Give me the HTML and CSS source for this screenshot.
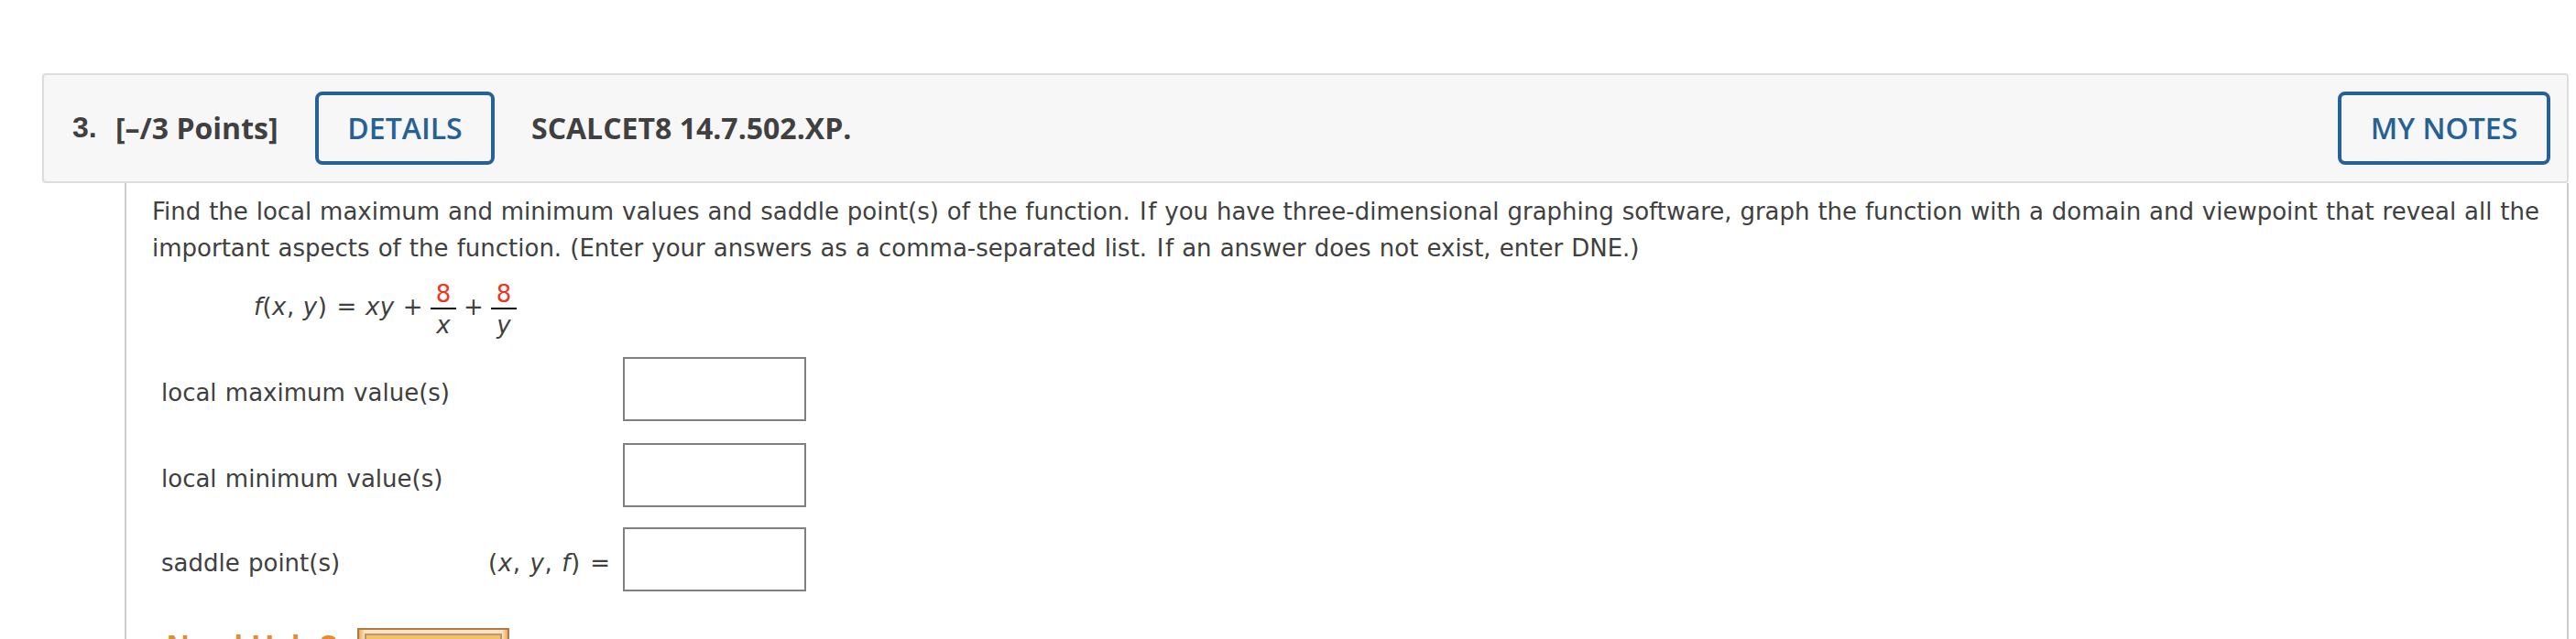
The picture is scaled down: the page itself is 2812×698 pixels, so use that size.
FILE: index.html
```html
<!DOCTYPE html>
<html lang="en">
<head>
<meta charset="utf-8">
<title>Question 3</title>
<link rel="stylesheet" href="styles.css">
</head>
<body>
<article class="question">
  <header class="question-header">
    <span class="number">3.</span>
    <span class="points">[–/3 Points]</span>
    <button class="btn details">DETAILS</button>
    <span class="source">SCALCET8 14.7.502.XP.</span>
    <button class="btn notes">MY NOTES</button>
  </header>
  <section class="question-body">
    <p class="prompt"><span class="line line-one">Find the local maximum and minimum values and saddle point(s) of the function. <span class="wide">I</span>f you have three-dimensional graphing software, graph the function with a domain and viewpoint that reveal all the</span>
    <span class="line line-two">important aspects of the function. (Enter your answers as a comma-separated list. <span class="wide">I</span>f an answer does not exist, enter DNE.)</span></p>
    <div class="formula">
      <span class="lhs"><i>f</i>(<i>x</i>, <i>y</i>) <span class="equals">=</span> <i>xy</i> +</span>
      <span class="fraction"><span class="num">8</span><i class="den">x</i></span>
      <span class="plus">+</span>
      <span class="fraction"><span class="num">8</span><i class="den">y</i></span>
    </div>
    <div class="answers">
      <div class="row"><label class="label" for="max">local maximum value(s)</label><input class="answer" id="max"></div>
      <div class="row"><label class="label" for="min">local minimum value(s)</label><input class="answer" id="min"></div>
      <div class="row row-saddle"><label class="label" for="saddle">saddle point(s)</label><span class="tuple"><span class="vars">(<i>x</i>, <i>y</i>, <i>f</i>)</span><span>=</span></span><input class="answer" id="saddle"></div>
    </div>
    <div class="help">
      <span class="help-title">Need Help?</span>
      <span class="help-button"><span class="help-face"></span></span>
    </div>
  </section>
</article>
</body>
</html>
```
FILE: styles.css
```css
* { box-sizing: border-box; }
body {
  margin: 0;
  height: 698px;
  overflow: hidden;
  background: #fff;
  color: #404040;
  font: 26px/40px Verdana, "DejaVu Sans", sans-serif;
}
.question { padding: 80px 8px 0 46px; }
.question-header {
  display: flex;
  align-items: center;
  height: 120px;
  padding: 0 18px 0 31px;
  border: 2px solid #ddd;
  border-radius: 4px;
  background: #f7f7f7;
  font: bold 32px/44px "Open Sans", sans-serif;
  white-space: nowrap;
}
.number { width: 47px; padding-bottom: 2px; font-family: "Liberation Sans", Arial, sans-serif; }
.points { width: 218px; }
.btn {
  height: 80px;
  padding: 0;
  border: 4px solid #266196;
  border-radius: 8px;
  background: transparent;
  color: #266196;
  font: 600 32px/44px "Open Sans", sans-serif;
}
.details { width: 196px; margin-right: 40px; }
.notes { width: 232px; margin-left: auto; }
.question-body {
  height: 498px;
  margin-left: 90px;
  padding: 11px 0 0 28px;
  border: solid #ccc;
  border-width: 0 2px;
}
.prompt { margin: 0; white-space: nowrap; }
.line { display: block; }
.line-one { word-spacing: 0.6px; }
.line-two { word-spacing: 0.85px; }
.wide { padding: 0 1.5px; }
.formula {
  display: flex;
  height: 78px;
  margin-top: 10px;
  padding-left: 111px;
  line-height: 34px;
}
.lhs, .plus { padding-top: 17px; white-space: pre; }
.lhs { width: 193px; letter-spacing: 0.4px; word-spacing: 0.6px; }
.equals { padding-left: 1px; }
.plus { width: 38px; text-align: center; }
.fraction { display: flex; flex-direction: column; width: 28px; text-align: center; }
.num { height: 37px; border-bottom: 2px solid #000; color: #ee3524; line-height: 40px; }
.den { line-height: 34px; }
.answers { padding: 11px 0 0 10px; }
.row { display: flex; width: 704px; height: 94px; }
.row-saddle { height: 110px; margin-top: -2px; }
.label { width: 357px; padding-top: 19px; word-spacing: 1px; }
.tuple {
  display: flex;
  justify-content: space-between;
  width: 133px;
  padding-top: 19px;
  white-space: nowrap;
}
.vars { letter-spacing: 0.6px; word-spacing: 1px; }
.answer {
  width: 200px;
  height: 70px;
  margin-left: auto;
  padding: 0;
  border: 2px solid #808080;
  background: #fff;
  font: inherit;
}
.help { display: flex; padding-left: 16px; }
.help-title {
  width: 208px;
  color: #e58a33;
  font: bold 34px/38px "Liberation Sans", Arial, sans-serif;
}
.help-button {
  width: 166px;
  height: 44px;
  padding: 4px 6px;
  border: 2px solid #b07a42;
  background: linear-gradient(to right, #f0a85c, transparent 6px, transparent 156px, #f0a85c), #fae3c6;
}
.help-face {
  display: block;
  height: 32px;
  border: 2px solid #b9966c;
  background: #f5c069;
}
```
